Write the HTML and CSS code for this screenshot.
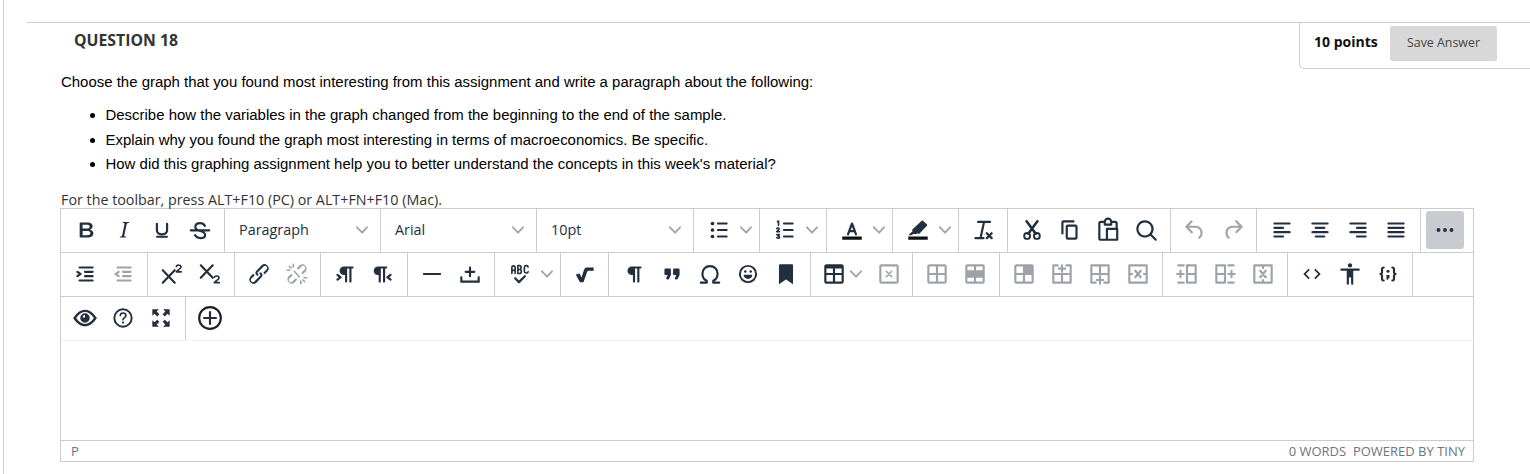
FILE: index.html
```html
<!DOCTYPE html>
<html lang="en">
<head>
    <meta charset="UTF-8">
    <title>Question 18</title>
    <link rel="stylesheet" href="styles.css">
</head>
<body>
<svg class="sprite"><symbol id="chev" viewBox="0 0 10 10"><path d="M8.7 2.2c.3-.3.8-.3 1 0 .4.4.4.9 0 1.2L5.7 7.8c-.3.3-.9.3-1.2 0L.2 3.4a.8.8 0 010-1.2c.3-.3.8-.3 1.1 0L5 6l3.7-3.8z"/></symbol></svg>
<div class="page">
    <div class="question">
        <div class="head">
            <h2 class="title">QUESTION 18</h2>
            <div class="points">
                <strong>10 points</strong>
                <button class="save" type="button">Save Answer</button>
            </div>
        </div>
        <div class="body">
            <p class="lead">Choose the graph that you found most interesting from this assignment and write a paragraph about the following:</p>
            <ul class="asks">
                <li>Describe how the variables in the graph changed from the beginning to the end of the sample.</li>
                <li>Explain why you found the graph most interesting in terms of macroeconomics. Be specific.</li>
                <li>How did this graphing assignment help you to better understand the concepts in this week's material?</li>
            </ul>
            <p class="hint">For the toolbar, press ALT+F10 (PC) or ALT+FN+F10 (Mac).</p>

            <div class="editor">
                <!-- first toolbar row -->
                <div class="row row1">
                    <div class="grp">
                        <span class="btn"><svg viewBox="0 0 24 24"><path transform="translate(-1.9 0) scale(1.15 1)" d="M7.8 19c-.3 0-.5 0-.6-.2l-.2-.5V5.7c0-.2 0-.4.2-.5l.6-.2h5c1.5 0 2.7.3 3.5 1 .7.6 1.1 1.4 1.1 2.5a3 3 0 01-.6 1.9c-.4.6-1 1-1.6 1.2.4.1.9.3 1.3.6s.8.7 1 1.2c.4.4.5 1 .5 1.6 0 1.3-.4 2.3-1.3 3-.8.7-2.1 1-3.8 1H7.8zm5-8.3c.6 0 1.2-.1 1.6-.5.4-.3.6-.7.6-1.3 0-1.1-.8-1.7-2.3-1.7H9.3v3.5h3.4zm.5 6c.7 0 1.3-.1 1.7-.4.4-.4.6-.9.6-1.5s-.2-1-.7-1.4c-.4-.3-1-.4-2-.4H9.4v3.8h4z"/></svg></span>
                        <span class="btn"><svg viewBox="0 0 24 24"><path d="M16.7 4.7l-.1.9h-.3c-.6 0-1 0-1.4.3-.3.3-.4.6-.5 1.1l-2.1 9.8v.6c0 .5.4.8 1.4.8h.2l-.2.8H8l.2-.8h.2c1.1 0 1.8-.5 2-1.5l2-9.8.1-.5c0-.6-.4-.8-1.4-.8h-.3l.2-.9h5.8z"/></svg></span>
                        <span class="btn"><svg viewBox="0 0 24 24"><path class="line" d="M7.3 6.3v6c0 3 1.9 3.7 4.7 3.7s4.7-.7 4.7-3.7v-6"/><rect x="6.5" y="17.4" width="11" height="1.8" rx=".9"/></svg></span>
                        <span class="btn"><svg viewBox="0 0 24 24"><path class="line" d="M16.5 8.2C15.6 6.6 14 5.7 12 5.7c-2.6 0-4.3 1.5-4.3 3.5 0 4.8 9 2.6 9 7.3 0 1.9-1.9 3-4.4 3-2.3 0-4-1-5-2.8M3.5 12.3h17"/></svg></span>
                    </div>
                    <div class="grp sel"><span>Paragraph</span><svg class="chev"><use href="#chev"/></svg></div>
                    <div class="grp sel"><span>Arial</span><svg class="chev"><use href="#chev"/></svg></div>
                    <div class="grp sel"><span>10pt</span><svg class="chev"><use href="#chev"/></svg></div>
                    <div class="grp">
                        <span class="btn"><svg viewBox="0 0 24 24"><path d="M11 5h8c.6 0 1 .4 1 1s-.4 1-1 1h-8a1 1 0 010-2zm0 6h8c.6 0 1 .4 1 1s-.4 1-1 1h-8a1 1 0 010-2zm0 6h8c.6 0 1 .4 1 1s-.4 1-1 1h-8a1 1 0 010-2z"/><circle cx="6" cy="6" r="1.7"/><circle cx="6" cy="12" r="1.7"/><circle cx="6" cy="18" r="1.7"/></svg></span>
                        <svg class="chev"><use href="#chev"/></svg>
                    </div>
                    <div class="grp">
                        <span class="btn"><svg viewBox="0 0 24 24"><path d="M11 5h8c.6 0 1 .4 1 1s-.4 1-1 1h-8a1 1 0 010-2zm0 6h8c.6 0 1 .4 1 1s-.4 1-1 1h-8a1 1 0 010-2zm0 6h8c.6 0 1 .4 1 1s-.4 1-1 1h-8a1 1 0 010-2z"/><path class="thin" d="M5 4.3l1-.6v4M4.4 10.6c.6-.8 2.2-.6 2.2.4 0 .8-1.500 1.200-2.200 2.500h2.400M4.500 16.300h2.200l-1.100 1.300c1 0 1.300.4 1.300 1s-.5 1-1.200 1c-.5 0-1-.2-1.200-.6"/></svg></span>
                        <svg class="chev"><use href="#chev"/></svg>
                    </div>
                    <div class="grp">
                        <span class="btn"><svg viewBox="0 0 24 24"><path class="line" d="M8.300 16L12 6l3.700 10M9.400 13h5.200"/><rect class="ink" x="3" y="18" width="18" height="3"/></svg></span>
                        <svg class="chev"><use href="#chev"/></svg>
                    </div>
                    <div class="grp">
                        <span class="btn"><svg viewBox="0 0 24 24"><path d="M16.500 3.500l3.700 3.200c.4.4.4 1 0 1.400l-6.700 7.100c-.3.3-.8.4-1.200.2l-.9-.4-.8.7H7.800l-2 1.100H3l3.900-3.700-.2-.8c-.1-.4 0-.8.3-1.100l7.900-7.200c.7-.6 1.800-.9 2.600-.5z"/><rect class="ink" x="3" y="18" width="18" height="3"/></svg></span>
                        <svg class="chev"><use href="#chev"/></svg>
                    </div>
                    <div class="grp">
                        <span class="btn"><svg viewBox="0 0 24 24"><path class="thin2" d="M7.500 4.500h11M13 4.500l-3 13.500M5 19.500h7.500M15.500 15l4.500 4.500M20 15l-4.500 4.500"/></svg></span>
                    </div>
                    <div class="grp">
                        <span class="btn"><svg viewBox="0 0 24 24"><path class="line blade" d="M7 4l8.500 11.500M17 4L8.500 15.500"/><circle class="ring" cx="7.500" cy="17.500" r="2.700"/><circle class="ring" cx="16.500" cy="17.500" r="2.700"/></svg></span>
                        <span class="btn"><svg viewBox="0 0 24 24"><path class="evn" d="M16 3H6a2 2 0 00-2 2v11h2V5h10V3zm1 4a2 2 0 012 2v10a2 2 0 01-2 2h-7a2 2 0 01-2-2V9c0-1.200.9-2 2-2h7zm0 12V9h-7v10h7z"/></svg></span>
                        <span class="btn"><svg viewBox="0 0 24 24"><path class="line" d="M8.500 4.500H5.500A1.500 1.500 0 004 6v13.500A1.500 1.500 0 005.500 21H10M15.500 4.500h3A1.500 1.500 0 0120 6v4M9 4.500a3 3 0 016 0V7H9zM11 11h9.500v10H11z"/></svg></span>
                        <span class="btn"><svg viewBox="0 0 24 24"><path class="evn" d="M16 17.300a8 8 0 111.400-1.400l4.300 4.400a1 1 0 01-1.400 1.400l-4.400-4.400zm-5-.3a6 6 0 100-12 6 6 0 000 12z"/></svg></span>
                    </div>
                    <div class="grp off">
                        <span class="btn"><svg viewBox="0 0 24 24"><path d="M6.400 8H12c3.700 0 6.200 2 6.800 5.100.6 2.700-.4 5.600-2.300 6.800a1 1 0 01-1-1.800c1.100-.6 1.800-2.700 1.400-4.600-.5-2.100-2.100-3.500-4.900-3.500H6.400l3.300 3.300a1 1 0 11-1.400 1.400l-5-5a1 1 0 010-1.400l5-5a1 1 0 011.400 1.400L6.400 8z"/></svg></span>
                        <span class="btn"><svg viewBox="0 0 24 24"><path d="M17.600 10H12c-2.800 0-4.400 1.400-4.900 3.500-.4 2 .3 4 1.400 4.600a1 1 0 11-1 1.800c-2-1.200-2.900-4.100-2.300-6.800.6-3 3-5.100 6.800-5.100h5.600l-3.300-3.300a1 1 0 111.400-1.400l5 5a1 1 0 010 1.400l-5 5a1 1 0 01-1.400-1.400l3.300-3.300z"/></svg></span>
                    </div>
                    <div class="grp">
                        <span class="btn"><svg viewBox="0 0 24 24"><path d="M5 5h14a1 1 0 010 2H5a1 1 0 110-2zm0 4h8a1 1 0 010 2H5a1 1 0 110-2zm0 4h14a1 1 0 010 2H5a1 1 0 010-2zm0 4h8a1 1 0 010 2H5a1 1 0 010-2z"/></svg></span>
                        <span class="btn"><svg viewBox="0 0 24 24"><path d="M5 5h14a1 1 0 010 2H5a1 1 0 110-2zm3 4h8a1 1 0 010 2H8a1 1 0 110-2zm-3 4h14a1 1 0 010 2H5a1 1 0 010-2zm3 4h8a1 1 0 010 2H8a1 1 0 010-2z"/></svg></span>
                        <span class="btn"><svg viewBox="0 0 24 24"><path d="M5 5h14a1 1 0 010 2H5a1 1 0 110-2zm6 4h8a1 1 0 010 2h-8a1 1 0 010-2zm-6 4h14a1 1 0 010 2H5a1 1 0 010-2zm6 4h8a1 1 0 010 2h-8a1 1 0 010-2z"/></svg></span>
                        <span class="btn"><svg viewBox="0 0 24 24"><path d="M5 5h14a1 1 0 010 2H5a1 1 0 110-2zm0 4h14a1 1 0 010 2H5a1 1 0 110-2zm0 4h14a1 1 0 010 2H5a1 1 0 010-2zm0 4h14a1 1 0 010 2H5a1 1 0 010-2z"/></svg></span>
                    </div>
                    <div class="grp last">
                        <span class="btn more"><svg viewBox="0 0 24 24"><circle cx="6" cy="12" r="1.800"/><circle cx="12" cy="12" r="1.800"/><circle cx="18" cy="12" r="1.800"/></svg></span>
                    </div>
                </div>

                <!-- second toolbar row -->
                <div class="row row2">
                    <div class="grp">
                        <span class="btn"><svg viewBox="0 0 24 24"><path d="M7 5h12c.6 0 1 .4 1 1s-.4 1-1 1H7a1 1 0 110-2zm5 4h7c.6 0 1 .4 1 1s-.4 1-1 1h-7a1 1 0 010-2zm0 4h7c.6 0 1 .4 1 1s-.4 1-1 1h-7a1 1 0 010-2zm-5 4h12a1 1 0 010 2H7a1 1 0 010-2zm-2.600-3.800L6.200 12l-1.800-1.200a1 1 0 011.200-1.600l3 2a1 1 0 010 1.600l-3 2a1 1 0 11-1.200-1.600z"/></svg></span>
                        <span class="btn off"><svg viewBox="0 0 24 24"><path d="M7 5h12c.6 0 1 .4 1 1s-.4 1-1 1H7a1 1 0 110-2zm5 4h7c.6 0 1 .4 1 1s-.4 1-1 1h-7a1 1 0 010-2zm0 4h7c.6 0 1 .4 1 1s-.4 1-1 1h-7a1 1 0 010-2zm-5 4h12a1 1 0 010 2H7a1 1 0 010-2zm1.600-3.800a1 1 0 01-1.200 1.600l-3-2a1 1 0 010-1.600l3-2a1 1 0 011.200 1.600L6.800 12l1.800 1.200z"/></svg></span>
                    </div>
                    <div class="grp">
                        <span class="btn"><svg viewBox="0 0 24 24"><path class="line" d="M3.500 8.500l11 11.500M14.500 8.500L3.500 20"/><path class="thin" d="M16 5c.6-1.700 4.300-1.500 4.300.6 0 1.500-3 2.500-4.300 4.400h4.600"/></svg></span>
                        <span class="btn"><svg viewBox="0 0 24 24"><path class="line" d="M3.500 4l11 11.500M14.500 4L3.500 15.500"/><path class="thin" d="M16 15c.6-1.700 4.300-1.500 4.300.6 0 1.500-3 2.500-4.300 4.400h4.600"/></svg></span>
                    </div>
                    <div class="grp">
                        <span class="btn"><svg viewBox="0 0 24 24"><path d="M6.200 12.300a1 1 0 011.400 1.400l-2 2a2 2 0 102.600 2.800l4.800-4.800a1 1 0 000-1.400 1 1 0 111.400-1.300 2.900 2.900 0 010 4L9.600 20a3.900 3.900 0 01-5.500-5.500l2-2.200zm11.600-.6a1 1 0 01-1.400-1.400l2-2a2 2 0 10-2.600-2.800L11 10.300a1 1 0 000 1.400A1 1 0 119.600 13a2.900 2.900 0 010-4L14.400 4a3.900 3.900 0 015.500 5.500l-2.100 2.200z"/></svg></span>
                        <span class="btn off"><svg viewBox="0 0 24 24"><path d="M6.200 12.300a1 1 0 011.400 1.400l-2.100 2.100a2 2 0 102.700 2.700l2.100-2.100a1 1 0 011.400 1.400L9.600 20a4 4 0 01-5.600-5.600l2.200-2.100zm11.600-.6a1 1 0 01-1.400-1.400l2.100-2.100a2 2 0 10-2.700-2.700l-2.100 2.100a1 1 0 01-1.400-1.400L14.400 4a4 4 0 015.600 5.600l-2.200 2.100z"/><path class="thin" d="M9.500 9.500l4.500 5M8.500 3v2.500M3 8.500h2.500M15.500 21v-2.500M21 15.500h-2.500M5 5l1.500 1.500M19 19l-1.500-1.500"/></svg></span>
                    </div>
                    <div class="grp">
                        <span class="btn"><svg viewBox="0 0 24 24"><path d="M11 5h8a1 1 0 010 2h-1v12a1 1 0 01-2 0V7h-2v12a1 1 0 01-2 0v-6h-1a4 4 0 010-8h1zM4.400 16.400L6.200 15l-1.800-1.400a1 1 0 011.200-1.600l3 2.200a1 1 0 010 1.600l-3 2.200a1 1 0 01-1.200-1.600z"/></svg></span>
                        <span class="btn"><svg viewBox="0 0 24 24"><path d="M8 5h7a1 1 0 010 2h-1v12a1 1 0 01-2 0V7h-2v12a1 1 0 01-2 0v-6H7a4 4 0 011-8zM19.600 16.400L17.800 15l1.800-1.400a1 1 0 00-1.200-1.600l-3 2.200a1 1 0 000 1.600l3 2.200a1 1 0 001.200-1.600z"/></svg></span>
                    </div>
                    <div class="grp">
                        <span class="btn"><svg viewBox="0 0 24 24"><path d="M4.500 11h15a1 1 0 010 2h-15a1 1 0 010-2z"/></svg></span>
                        <span class="btn"><svg viewBox="0 0 24 24"><path d="M11 11H8a1 1 0 110-2h3V6c0-.6.4-1 1-1s1 .4 1 1v3h3c.6 0 1 .4 1 1s-.4 1-1 1h-3v3c0 .6-.4 1-1 1a1 1 0 01-1-1v-3zm10 4v5H3v-5c0-.6.4-1 1-1s1 .4 1 1v3h14v-3c0-.6.4-1 1-1s1 .4 1 1z"/></svg></span>
                    </div>
                    <div class="grp">
                        <span class="btn"><svg viewBox="0 0 24 24"><path class="thin" d="M4.500 11.500V5.800c0-1.800 3-1.800 3 0v5.700M4.500 8.700h3M10 4.300v7.200h1.700c2 0 2-3.700 0-3.700H10M11.700 7.800c1.700 0 1.700-3.500 0-3.500H10M19.500 5.500c-.4-1.700-3.500-1.700-3.500.7v3c0 2.400 3 2.400 3.500.7"/><path class="line" d="M7.500 16l3.500 3.500 5.500-5.500"/></svg></span>
                        <svg class="chev"><use href="#chev"/></svg>
                    </div>
                    <div class="grp">
                        <span class="btn"><svg viewBox="0 0 24 24"><path d="M3.500 12.500l3.600-1 1.600 3.700 2.300-6.600C11.400 7 12.300 6 13.500 6h6.500v3h-4.500c-.8 0-1.300.5-1.600 1.200l-3.300 9.300H7.300z"/></svg></span>
                    </div>
                    <div class="grp">
                        <span class="btn"><svg viewBox="0 0 24 24"><path d="M11 5h7a1 1 0 010 2h-1v12a1 1 0 01-2 0V7h-2v12a1 1 0 01-2 0v-6h-1a4 4 0 010-8h1z"/></svg></span>
                        <span class="btn"><svg viewBox="0 0 24 24"><path d="M7.500 17h.9c.4 0 .7-.2.9-.6L11 13V8c0-.6-.4-1-1-1H6a1 1 0 00-1 1v4c0 .6.4 1 1 1h2l-1.300 2.700a1 1 0 00.8 1.300zm8 0h.9c.4 0 .7-.2.9-.6L19 13V8c0-.6-.4-1-1-1h-4a1 1 0 00-1 1v4c0 .6.4 1 1 1h2l-1.300 2.700a1 1 0 00.8 1.300z"/></svg></span>
                        <span class="btn"><svg viewBox="0 0 24 24"><path class="line" d="M3.500 20H9v-1.800C6.500 17 5 14.500 5 11.700 5 7.500 8 4.700 12 4.700s7 2.800 7 7c0 2.800-1.500 5.300-4 6.500V20h5.500"/></svg></span>
                        <span class="btn"><svg viewBox="0 0 24 24"><circle class="ring" cx="12" cy="12" r="7.500"/><circle cx="9.500" cy="9.700" r="1.200"/><circle cx="14.500" cy="9.700" r="1.200"/><path d="M8 12.800h8c0 2.200-1.800 3.800-4 3.800s-4-1.600-4-3.800z"/></svg></span>
                        <span class="btn"><svg viewBox="0 0 24 24"><path d="M5.500 4v17.500L12 17l6.500 4.500V4c0-.6-.4-1-1-1h-11a1 1 0 00-1 1z"/></svg></span>
                    </div>
                    <div class="grp tbl">
                        <span class="btn"><svg viewBox="0 0 24 24"><path class="evn" d="M19 3a2 2 0 012 2v14a2 2 0 01-2 2H5a2 2 0 01-2-2V5c0-1.100.9-2 2-2h14zM5 13v6h6v-6H5zm14 0h-6v6h6v-6zm0-6h-6v4h6V7zM5 11h6V7H5v4z"/></svg></span>
                        <svg class="chev"><use href="#chev"/></svg>
                        <span class="btn off"><svg viewBox="0 0 24 24"><path class="evn" d="M19 3a2 2 0 012 2v14a2 2 0 01-2 2H5a2 2 0 01-2-2V5c0-1.100.9-2 2-2h14zM5 5v14h14V5H5z"/><path class="thin" d="M9.500 9.500l5 5M14.500 9.500l-5 5"/></svg></span>
                    </div>
                    <div class="grp off">
                        <span class="btn"><svg viewBox="0 0 24 24"><path class="evn" d="M19 3a2 2 0 012 2v14a2 2 0 01-2 2H5a2 2 0 01-2-2V5c0-1.100.9-2 2-2h14zM5 13v6h6v-6H5zm14 0h-6v6h6v-6zm0-8h-6v6h6V5zM5 11h6V5H5v6z"/></svg></span>
                        <span class="btn"><svg viewBox="0 0 24 24"><path class="evn" d="M19 3a2 2 0 012 2v14a2 2 0 01-2 2H5a2 2 0 01-2-2V5c0-1.100.9-2 2-2h14zM5 15.500V19h6v-3.500H5zm14 0h-6V19h6v-3.500zM19 5h-6v3.500h6V5zM5 8.500h6V5H5v3.500z"/></svg></span>
                    </div>
                    <div class="grp off">
                        <span class="btn"><svg viewBox="0 0 24 24"><path class="evn" d="M19 3a2 2 0 012 2v14a2 2 0 01-2 2H5a2 2 0 01-2-2V5c0-1.100.9-2 2-2h14zM5 13v6h6v-6H5zm14 0h-6v6h6v-6zM5 11h6V5H5v6z"/></svg></span>
                        <span class="btn"><svg viewBox="0 0 24 24"><path class="thin2" d="M8 4H4v16h16V4h-4M4 12h16M12 12v8M12 4v6M9 7h6"/></svg></span>
                        <span class="btn"><svg viewBox="0 0 24 24"><path class="thin2" d="M8 20H4V4h16v16h-4M4 12h16M12 4v8M12 14v7M9 17.500h6"/></svg></span>
                        <span class="btn"><svg viewBox="0 0 24 24"><path class="thin2" d="M4 4h16v16H4zM4 12h2.500M17.500 12H20M9.500 9l5 6M14.500 9l-5 6"/></svg></span>
                    </div>
                    <div class="grp off">
                        <span class="btn"><svg viewBox="0 0 24 24"><path class="thin2" d="M12 4h8v16h-8M4 4h5M4 20h5M12 4v16M12 12h8M3 12h6M6 9v6"/></svg></span>
                        <span class="btn"><svg viewBox="0 0 24 24"><path class="thin2" d="M12 4H4v16h8M15 4h5M15 20h5M12 4v16M12 12H4M15 12h6M18 9v6"/></svg></span>
                        <span class="btn"><svg viewBox="0 0 24 24"><path class="thin2" d="M4 4h16v16H4zM12 4v2.500M12 17.500V20M9.500 9l5 6M14.500 9l-5 6"/></svg></span>
                    </div>
                    <div class="grp">
                        <span class="btn"><svg viewBox="0 0 24 24"><path transform="translate(2.4 2.4) scale(.8)" d="M9.400 7.400L4.800 12l4.600 4.600L8 18l-6-6 6-6 1.400 1.400zm5.200 0L19.200 12l-4.600 4.600L16 18l6-6-6-6-1.400 1.400z"/></svg></span>
                        <span class="btn"><svg viewBox="0 0 24 24"><path d="M12 2a2 2 0 012 2 2 2 0 01-2 2 2 2 0 01-2-2c0-1.100.9-2 2-2zm8 7h-5v12c0 .6-.4 1-1 1a1 1 0 01-1-1v-5c0-.6-.4-1-1-1s-1 .4-1 1v5c0 .6-.4 1-1 1a1 1 0 01-1-1V9H4a1 1 0 110-2h16c.6 0 1 .4 1 1s-.4 1-1 1z"/></svg></span>
                        <span class="btn"><svg viewBox="0 0 24 24"><path class="thin2" d="M8 6c-2 0-1.500 2-1.500 3.500S6 12 5 12c1 0 1.500 1 1.500 2.500S6 18 8 18M16 6c2 0 1.500 2 1.500 3.500s.5 2.500 1.500 2.500c-1 0-1.500 1-1.500 2.500S18 18 16 18"/><circle cx="12" cy="9.500" r="1.400"/><path d="M10.600 13h2.800v2l-1.700 2.300h-1.100z"/></svg></span>
                    </div>
                    <div class="grp last"></div>
                </div>

                <!-- third toolbar row -->
                <div class="row row3">
                    <div class="grp">
                        <span class="btn"><svg viewBox="0 0 24 24"><path class="evn" transform="translate(-1.2 -1.2) scale(1.1)" d="M12 5c3.600 0 6.900 2.300 10 7-3.100 4.700-6.400 7-10 7-3.600 0-6.900-2.300-10-7 3.100-4.700 6.400-7 10-7zm0 2c-2.500 0-5 1.600-7.400 5 2.400 3.400 4.900 5 7.400 5s5-1.600 7.400-5c-2.400-3.400-4.900-5-7.400-5zm0 1a4 4 0 110 8 4 4 0 010-8zm0 1.500a2 2 0 00-2 2h2z"/></svg></span>
                        <span class="btn"><svg viewBox="0 0 24 24"><circle class="ring" cx="12" cy="12" r="8"/><path class="thin" d="M9.500 9.800c0-3.300 5.200-3.200 5.200-.1 0 2-2.700 2-2.700 4"/><circle cx="12" cy="16.200" r="1"/></svg></span>
                        <span class="btn"><svg viewBox="0 0 24 24"><path d="M4 4h6L8 6l2.500 2.500-2 2L6 8l-2 2zM20 4v6l-2-2-2.500 2.500-2-2L16 6l-2-2zM4 20v-6l2 2 2.500-2.500 2 2L8 18l2 2zM20 20h-6l2-2-2.500-2.500 2-2L18 16l2-2z"/></svg></span>
                    </div>
                    <div class="grp last">
                        <span class="btn"><svg viewBox="0 0 24 24"><circle class="ring2" cx="12" cy="12" r="10"/><path class="line" d="M12 6.500v11M6.500 12h11"/></svg></span>
                    </div>
                </div>

                <div class="area"></div>

                <div class="status">
                    <span>P</span>
                    <span class="status-right">0 WORDS &nbsp;POWERED BY TINY</span>
                </div>
            </div>
        </div>
    </div>
</div>
</body>
</html>
```

FILE: styles.css
```css
*{
    box-sizing: border-box;
}

html,body{
    margin: 0;
    padding: 0;
    background: #fff;
}

.sprite{
    display: none;
}

.page{
    margin-left: 3px;
    height: 474px;
    overflow: hidden;
    border-left: 1px solid #ccc;
    padding: 22px 0 0 23px;
}

.question{
    border-top: 1px solid #ccc;
}

.head{
    display: flex;
    justify-content: space-between;
    align-items: flex-start;
}

.title{
    margin: 7px 0 0 47px;
    font: bold 15.8px/20px "Open Sans", sans-serif;
    color: #333;
}

.points{
    display: flex;
    align-items: flex-start;
    width: 231px;
    height: 46px;
    padding: 3px 0 0 14px;
    border-left: 1px solid #ccc;
    border-bottom: 1px solid #ccc;
    border-radius: 0 0 0 5px;
    font: 14px/32px "Open Sans", sans-serif;
    color: #111;
}

.points strong{
    width: 76px;
}

.save{
    width: 107px;
    height: 35px;
    padding: 0 0 2px;
    border: 0;
    border-radius: 2px;
    background: #d8d8d8;
    color: #444;
    font: 12.4px "Open Sans", sans-serif;
}

.body{
    margin: 3px 0 0 33px;
    width: 1414px;
}

.lead{
    margin: 0;
    padding-left: 1px;
    font: 14.96px/20px "Liberation Sans", Arial, sans-serif;
    color: #000;
}

.asks{
    margin: 11px 0 0;
    padding: 0 0 0 45.5px;
    font: 14.96px/24.5px "Liberation Sans", Arial, sans-serif;
    color: #000;
}

.hint{
    margin: 14px 0 0;
    padding-left: 1px;
    font: 14.3px/17px "Open Sans", sans-serif;
    color: #333;
}

.editor{
    height: 254px;
    border: 1px solid #ccc;
    display: flex;
    flex-direction: column;
    color: #222f3e;
}

.row{
    display: grid;
    height: 44px;
    border-bottom: 1px solid #ccc;
    flex: none;
}
.row1{
    grid-template-columns: 164px 156px 156px 157px 66px 67px 66px 66px 49px 163px 86px 164px 1fr;
}
.row2{
    grid-template-columns: 87px 87px 86px 87px 87px 66px 48px 202px 102px 87px 163px 125px 125px 1fr;
}
.row3{
    grid-template-columns: 125px 1fr;
    border-bottom: 1px solid #f2f2f2;
}

.grp{
    display: flex;
    align-items: center;
    justify-content: center;
    border-right: 1px solid #ccc;
    min-width: 0;
}
.grp.last{
    border-right: 0;
    justify-content: flex-start;
    padding-left: 5px;
}

.btn{
    display: flex;
    align-items: center;
    justify-content: center;
    flex: none;
    width: 38px;
    height: 38px;
    border-radius: 3px;
}
.btn svg{
    width: 26px;
    height: 26px;
    fill: #222f3e;
}
.off svg{
    fill: #9ea3a9;
}
.btn.off svg .thin,.off .btn svg .thin,.off .btn svg .thin2{
    stroke: #9ea3a9;
}
.more{
    background: #c8cbcf;
}

.chev{
    flex: none;
    width: 12px;
    height: 12px;
    margin: 0 2px;
    fill: #a0a5ab;
}

.sel{
    justify-content: space-between;
    padding: 0 10px 0 14px;
    font: 14.4px/20px "Open Sans", sans-serif;
}

.tbl{
    justify-content: flex-start;
    padding-left: 4px;
}
.tbl .chev{
    margin-left: -3px;
}
.tbl .btn.off{
    margin-left: 6px;
}

/* stroked icon parts */
.btn svg .line,.btn svg .thin,.btn svg .thin2,.btn svg .ring,.btn svg .ring2{
    fill: none;
    stroke-linecap: round;
    stroke-linejoin: round;
}
.line{
    stroke: #222f3e;
    stroke-width: 2;
}
.blade{
    stroke-width: 2.4;
}
.thin{
    stroke: #222f3e;
    stroke-width: 1.5;
}
.thin2{
    stroke: #222f3e;
    stroke-width: 2;
}
.ring{
    stroke: #222f3e;
    stroke-width: 1.8;
}
.ring2{
    stroke: #222;
    stroke-width: 2;
}
.btn svg .ink{
    fill: #111;
}
.evn{
    fill-rule: evenodd;
}

.area{
    flex: 1;
}

.status{
    display: flex;
    justify-content: space-between;
    height: 21px;
    padding: 0 8px 0 10px;
    border-top: 1px solid #ccc;
    font: 13px/21px "Open Sans", sans-serif;
    color: #6b7580;
    flex: none;
}
```
